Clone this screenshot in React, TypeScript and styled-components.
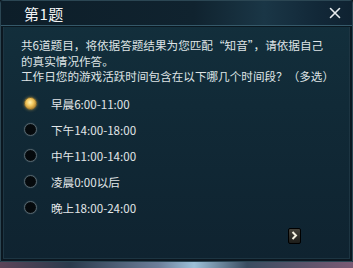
import React from "react";
import styled, { createGlobalStyle } from "styled-components";

const Global = createGlobalStyle`
  html, body { margin: 0; padding: 0; background: #0c1820; }
  body { width: 353px; height: 268px; overflow: hidden; font-family: "Noto Sans CJK SC", "Liberation Sans", sans-serif; }
`;

const Page = styled.div`
  display: flex;
  flex-direction: column;
  width: 353px;
  height: 268px;
`;

const Panel = styled.div`
  height: 262px;
  box-sizing: border-box;
  border: 1px solid #2b4653;
  border-radius: 3px 3px 0 0;
  box-shadow: inset 0 0 0 2px #0b1720, inset 0 0 0 3px #1d3542;
  background: linear-gradient(180deg, #13303d 0%, #112a37 40%, #0f2330 100%);
  display: flex;
  flex-direction: column;
`;

const Header = styled.div`
  height: 25px;
  box-sizing: border-box;
  display: flex;
  align-items: center;
  justify-content: space-between;
  padding: 0 9px 0 23px;
  background: linear-gradient(90deg, #0d1e29 0%, #10232f 55%, #1a3646 75%, #122838 90%, #0f2231 100%);
  border-bottom: 1px solid #35596a;
  box-shadow: 0 1px 0 #0a1820;
`;

const Title = styled.div`
  color: #f2f4f5;
  font-size: 15px;
  letter-spacing: 0.5px;
  line-height: 1;
`;

const Close = styled.div`
  width: 16px;
  height: 16px;
  display: flex;
  align-items: center;
  justify-content: center;
`;

const Body = styled.div`
  flex: 1;
  display: flex;
  flex-direction: column;
  padding: 12px 12px 0 20px;
`;

const Intro = styled.p`
  margin: 0;
  color: #dfe4e6;
  font-size: 11.6px;
  line-height: 15.5px;
`;

const Quote = styled.span`
  font-feature-settings: "fwid";
`;

const Options = styled.div`
  display: flex;
  flex-direction: column;
  gap: 8.1px;
  margin-top: 10px;
  padding-left: 3px;
`;

const Option = styled.div`
  display: flex;
  align-items: center;
  gap: 14px;
  height: 18px;
  color: #e2e6e8;
  font-size: 11.6px;
`;

const Radio = styled.span<{ $on?: boolean }>`
  width: 13px;
  height: 13px;
  border-radius: 50%;
  box-sizing: border-box;
  border: 1px solid ${(p) => (p.$on ? "#8a7030" : "#56666e")};
  background: ${(p) =>
    p.$on
      ? "radial-gradient(circle at 45% 40%, #fff3b0 0%, #f0c45a 40%, #a8782a 80%)"
      : "radial-gradient(circle, #05090c 55%, #1a252b 100%)"};
  box-shadow: ${(p) => (p.$on ? "0 0 3px rgba(240,200,90,0.5)" : "0 0 1px #5a6a72")};
`;

const Footer = styled.div`
  display: flex;
  justify-content: flex-end;
  padding: 11px 39px 0 0;
`;

const NextBtn = styled.div`
  width: 11px;
  height: 14px;
  border-radius: 2px;
  background: linear-gradient(180deg, #45423a 0%, #1d1d1a 100%);
  border: 1px solid #000;
  display: flex;
  align-items: center;
  justify-content: center;
`;

const Strip = styled.div`
  height: 6px;
  background: linear-gradient(90deg, #5a4458 0%, #2b3a4c 20%, #6c7f9a 45%, #9cc0d8 55%, #3a4c60 70%, #7a5a74 100%);
`;

const options = ["早晨6:00-11:00", "下午14:00-18:00", "中午11:00-14:00", "凌晨0:00以后", "晚上18:00-24:00"];

export default function App() {
  return (
    <Page>
      <Global />
      <Panel>
        <Header>
          <Title>第1题</Title>
          <Close>
            <svg width="14" height="14" viewBox="0 0 14 14">
              <path d="M2.5 2.5 L11.5 11.5 M11.5 2.5 L2.5 11.5" stroke="#e8ecee" strokeWidth="1.6" strokeLinecap="round" />
            </svg>
          </Close>
        </Header>
        <Body>
          <Intro>
            共6道题目，将依据答题结果为您匹配<Quote>“</Quote>知音<Quote>”</Quote>，请依据自己
            <br />
            的真实情况作答。
            <br />
            工作日您的游戏活跃时间包含在以下哪几个时间段？（多选）
          </Intro>
          <Options>
            {options.map((o, i) => (
              <Option key={o}>
                <Radio $on={i === 0} />
                {o}
              </Option>
            ))}
          </Options>
          <Footer>
            <NextBtn>
              <svg width="7" height="9" viewBox="0 0 7 9">
                <path d="M1.5 1 L5 4.5 L1.5 8" stroke="#f4f0e0" strokeWidth="2" fill="none" />
              </svg>
            </NextBtn>
          </Footer>
        </Body>
      </Panel>
      <Strip />
    </Page>
  );
}
